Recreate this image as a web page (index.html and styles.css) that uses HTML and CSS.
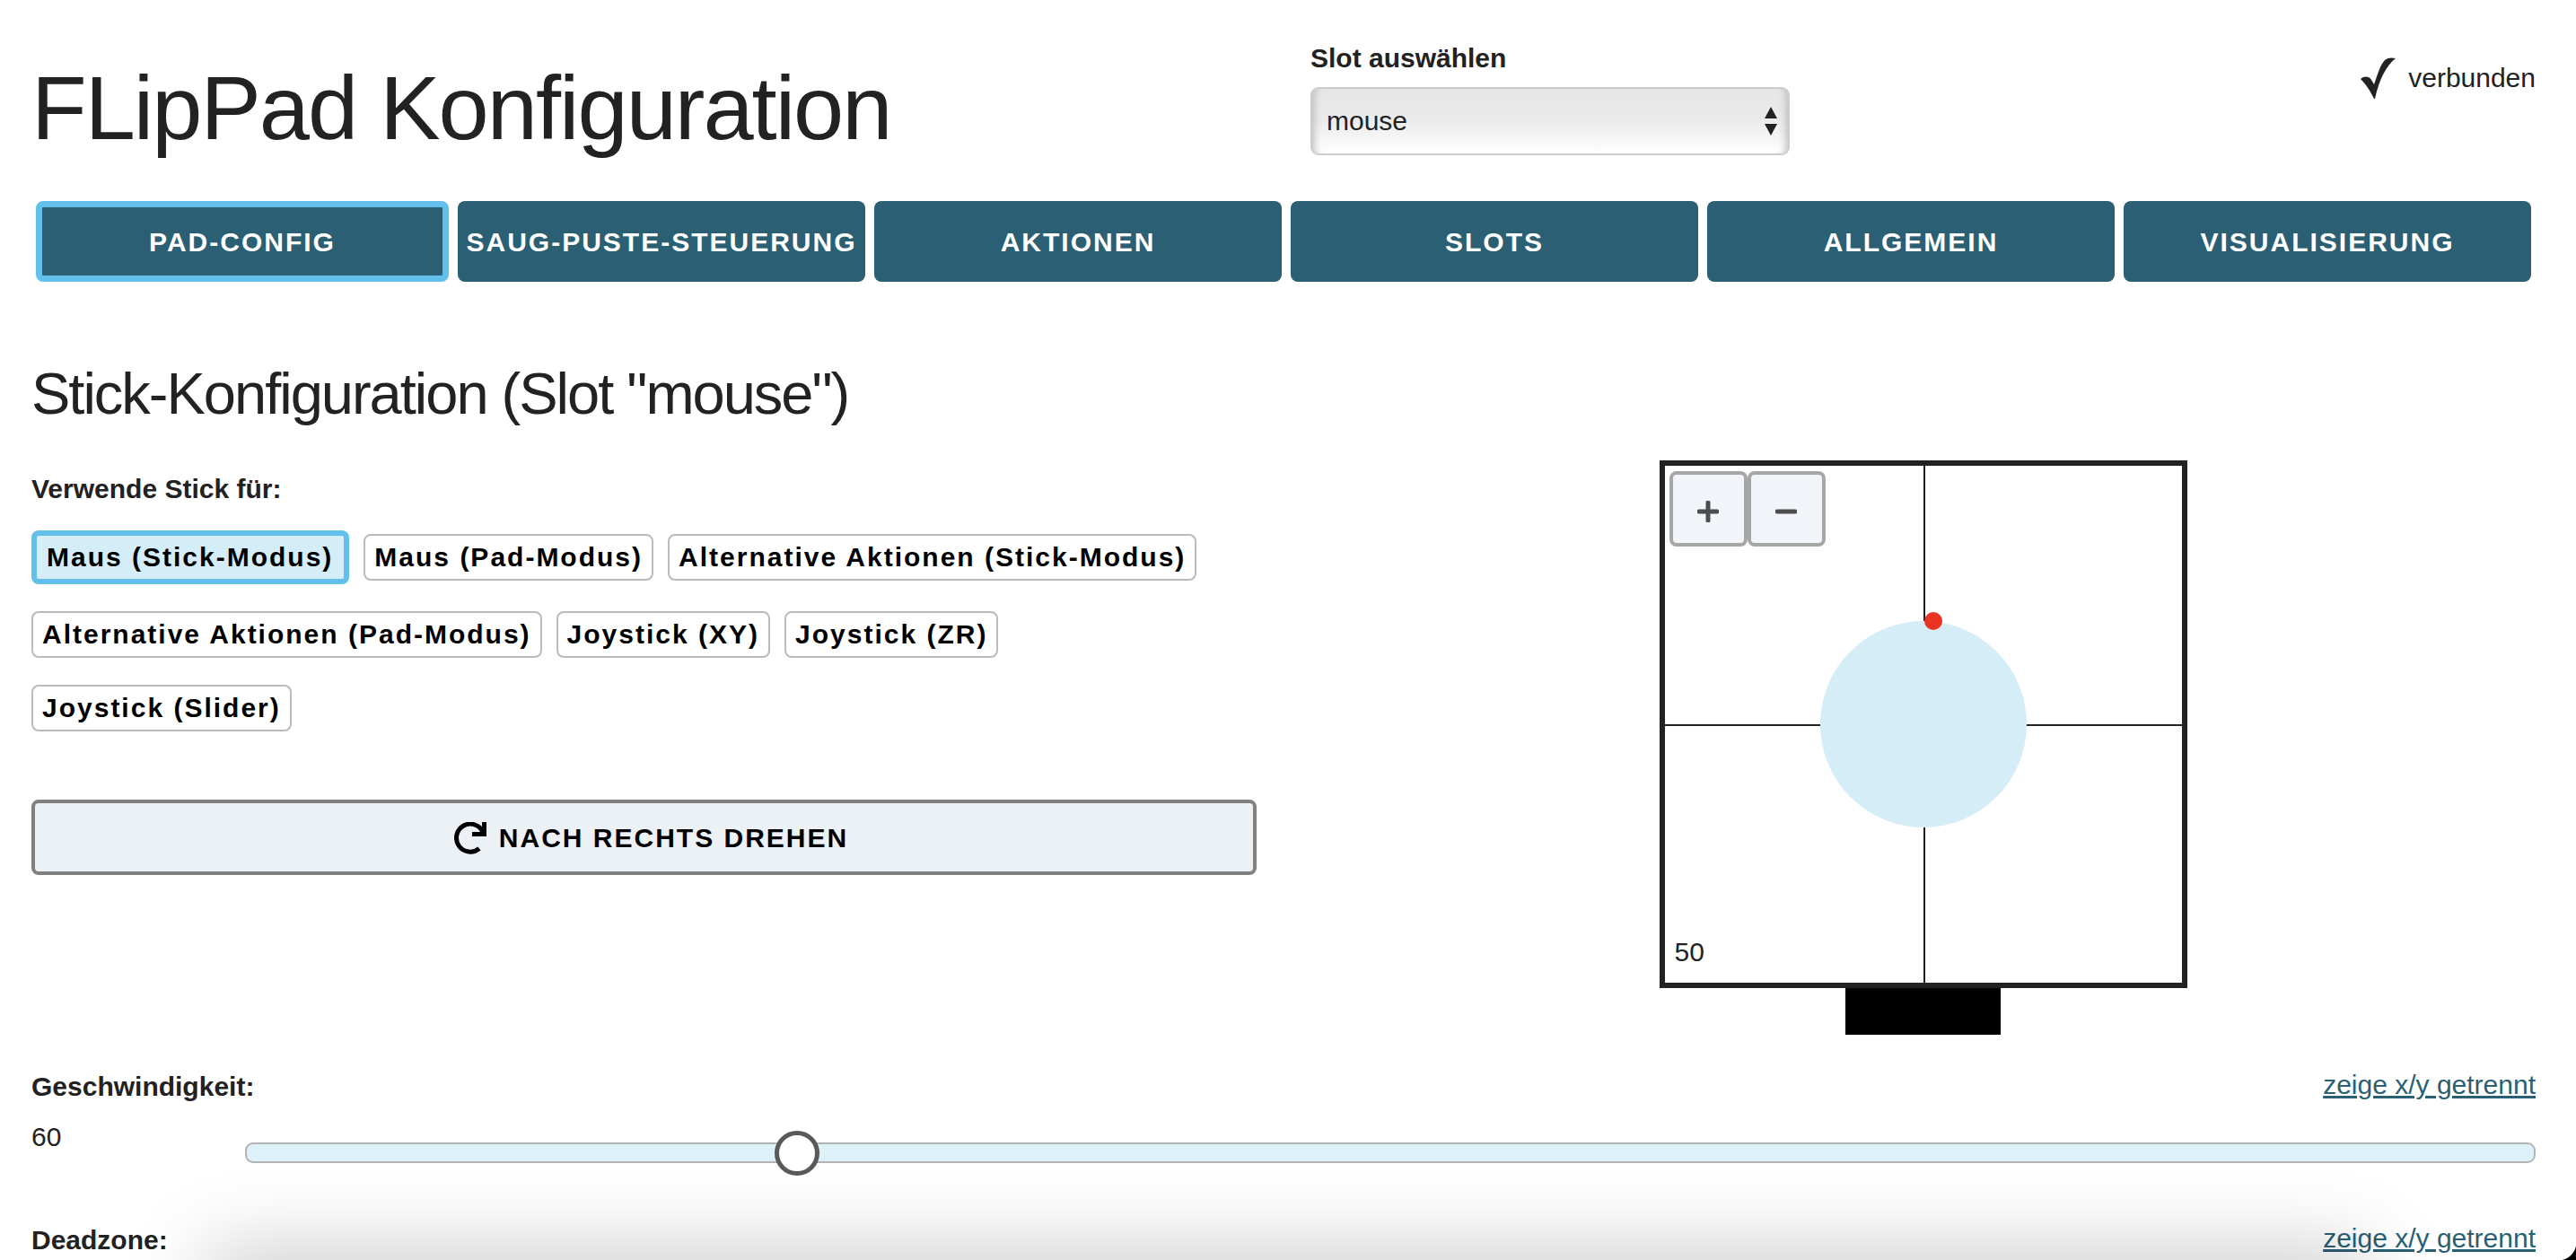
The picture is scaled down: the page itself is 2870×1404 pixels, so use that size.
FILE: index.html
```html
<!DOCTYPE html>
<html lang="de">
<head>
<meta charset="utf-8">
<meta name="viewport" content="width=device-width, initial-scale=1">
<title>FLipPad Konfiguration</title>
<link rel="stylesheet" href="styles.css">
</head>
<body>
<div class="page">
  <header class="header columns">
    <h1 class="title">FLipPad Konfiguration</h1>
    <div class="header-side">
      <div class="slot">
        <label class="label" for="slot">Slot auswählen</label>
        <div class="select-wrap">
          <select class="select" id="slot"><option>mouse</option></select>
          <svg class="select-arrows" viewBox="0 0 14 32" aria-hidden="true"><path d="M7 0 14 13H0ZM7 32 0 19H14Z"/></svg>
        </div>
      </div>
      <p class="status">
        <svg class="check" viewBox="0 0 39 46" aria-hidden="true"><path d="M0 24C4 20 10 21 12 25L15 30C19 19 22 8 27 3C30 0 35 0 39 1C28 10 21 24 16 46H15C11 38 7 31 0 24Z"/></svg>
        <span>verbunden</span>
      </p>
    </div>
  </header>

  <nav class="tabs">
    <button class="tab tab-active" type="button">Pad-Config</button>
    <button class="tab" type="button">Saug-Puste-Steuerung</button>
    <button class="tab" type="button">Aktionen</button>
    <button class="tab" type="button">Slots</button>
    <button class="tab" type="button">Allgemein</button>
    <button class="tab" type="button">Visualisierung</button>
  </nav>

  <main>
    <h2 class="subtitle">Stick-Konfiguration (Slot "mouse")</h2>
    <div class="columns">
      <section>
        <h3 class="label">Verwende Stick für:</h3>
        <div class="modes">
          <button class="mode mode-active" type="button">Maus (Stick-Modus)</button>
          <button class="mode" type="button">Maus (Pad-Modus)</button>
          <button class="mode" type="button">Alternative Aktionen (Stick-Modus)</button>
          <button class="mode" type="button">Alternative Aktionen (Pad-Modus)</button>
          <button class="mode" type="button">Joystick (XY)</button>
          <button class="mode" type="button">Joystick (ZR)</button>
          <button class="mode" type="button">Joystick (Slider)</button>
        </div>
        <button class="rotate" type="button">
          <svg class="rotate-icon" viewBox="0 0 36 36" aria-hidden="true"><path d="M28 29.500A15.500 15.500 0 1 1 32 11" fill="none" stroke="#000" stroke-width="5"/><path d="M31 0H36V16H20V11H28L31 8Z"/></svg>
          <span>Nach rechts drehen</span>
        </button>
      </section>
      <section class="pad-area">
        <div class="pad">
          <div class="pad-zone"></div>
          <div class="pad-dot"></div>
          <div class="pad-zoom">
            <button class="zoom" type="button" aria-label="Vergrößern"><svg viewBox="0 0 24 24"><path d="M12 2V22M2 12H22"/></svg></button>
            <button class="zoom" type="button" aria-label="Verkleinern"><svg viewBox="0 0 24 24"><path d="M2 12H22"/></svg></button>
          </div>
          <span class="pad-value">50</span>
        </div>
        <div class="pad-foot"></div>
      </section>
    </div>

    <section class="setting">
      <div class="setting-head">
        <label class="label" for="speed">Geschwindigkeit:</label>
        <a class="link" href="#speed">zeige x/y getrennt</a>
      </div>
      <div class="setting-row">
        <output class="setting-value" for="speed">60</output>
        <input class="slider" id="speed" type="range" min="0" max="255" value="60">
      </div>
    </section>
    <section class="setting">
      <div class="setting-head">
        <span class="label">Deadzone:</span>
        <a class="link" href="#deadzone">zeige x/y getrennt</a>
      </div>
    </section>
  </main>
</div>
<div class="bottom-shade" aria-hidden="true"></div>
<div class="window-corner" aria-hidden="true"></div>
</body>
</html>
```
FILE: styles.css
```css
* {
  box-sizing: border-box;
}

html,
body {
  height: 100%;
}

body {
  margin: 0;
  overflow: hidden;
  background: #fff;
  color: #222;
  font: 30px/48px "Liberation Sans", Arial, sans-serif;
}

button,
select {
  color: inherit;
  font: inherit;
}

button {
  cursor: pointer;
}

h1,
h2,
h3,
p {
  margin: 0;
}

.page {
  padding: 41px 45px 0 35px;
}

.columns {
  display: grid;
  grid-template-columns: 1fr 1fr;
  column-gap: 60px;
}

.label {
  display: block;
  font-size: 30px;
  font-weight: 700;
  line-height: 48px;
}

/* Header */

.title {
  padding-top: 19px;
  font-size: 101px;
  font-weight: 400;
  line-height: 120px;
  letter-spacing: -2px;
}

.header-side {
  display: flex;
  justify-content: space-between;
  align-items: flex-start;
}

.slot {
  width: 534px;
}

.select-wrap {
  display: grid;
  align-items: center;
  margin-top: 8px;
}

.select,
.select-arrows {
  grid-area: 1 / 1;
}

.select {
  width: 100%;
  height: 76px;
  padding: 0 16px;
  appearance: none;
  border: 2px solid #ccc;
  border-radius: 9px;
  background: linear-gradient(#e6e6e6, #ebebeb 50%, #fff);
  box-shadow: inset 10px 0 8px -8px #bbb, inset -10px 0 8px -8px #bbb;
}

.select-arrows {
  justify-self: end;
  width: 14px;
  height: 32px;
  margin-right: 14px;
  fill: #222;
  pointer-events: none;
}

.status {
  display: flex;
  align-items: center;
  gap: 14px;
  padding-top: 22px;
}

.check {
  width: 39px;
  height: 46px;
  fill: #222;
}

/* Tabs */

.tabs {
  display: flex;
  gap: 10px;
  margin-top: 44px;
  padding: 0 5px;
}

.tab {
  flex: 1 1 0;
  height: 90px;
  padding: 2px 4px 0;
  border: 0;
  border-radius: 8px;
  background: #2a5f74;
  color: #fff;
  font-weight: 700;
  letter-spacing: 2px;
  text-transform: uppercase;
  white-space: nowrap;
}

.tab-active {
  padding: 2px 0 0;
  border: 7px solid #62c0eb;
}

/* Stick configuration */

.subtitle {
  margin: 85px 0 42px;
  font-size: 65px;
  font-weight: 400;
  line-height: 80px;
  letter-spacing: -2px;
}

.modes {
  display: flex;
  flex-wrap: wrap;
  align-items: center;
  gap: 30px 16px;
  margin-top: 22px;
}

.mode {
  height: 52px;
  padding: 0 10px;
  border: 2px solid #bbb;
  border-radius: 8px;
  background: #fff;
  color: #000;
  font-weight: 700;
  line-height: 48px;
  letter-spacing: 2px;
}

.mode-active {
  height: 60px;
  padding: 0 12px 0 11px;
  border: 6px solid #62c0eb;
  background: #d4edf8;
}

.rotate {
  display: flex;
  justify-content: center;
  align-items: center;
  gap: 14px;
  width: 100%;
  height: 84px;
  margin-top: 76px;
  padding: 2px 0 0 16px;
  border: 4px solid #808080;
  border-radius: 8px;
  background: #ecf1f6;
  color: #000;
  font-weight: 700;
  letter-spacing: 2px;
  text-transform: uppercase;
}

.rotate-icon {
  width: 36px;
  height: 36px;
}

.pad-area {
  display: flex;
  flex-direction: column;
  align-items: center;
  margin-top: -8px;
}

.pad {
  position: relative;
  width: 588px;
  height: 588px;
  border: 6px solid #222;
  background:
    linear-gradient(#222, #222) 288px 0 / 2px 100% no-repeat,
    linear-gradient(#222, #222) 0 288px / 100% 2px no-repeat;
}

.pad-zone {
  position: absolute;
  inset: 173px;
  border-radius: 50%;
  background: #d4edf7;
}

.pad-dot {
  position: absolute;
  top: 163px;
  left: 289px;
  width: 20px;
  height: 20px;
  border-radius: 50%;
  background: #eb3323;
}

.pad-zoom {
  position: absolute;
  top: 6px;
  left: 5px;
  display: flex;
}

.zoom {
  display: grid;
  place-items: center;
  width: 87px;
  height: 84px;
  padding: 0;
  border: 4px solid #a6a6a6;
  border-radius: 8px;
  background: #f1f5f9;
}

.zoom svg {
  width: 24px;
  height: 24px;
  margin-top: 6px;
  stroke: #4d4d4d;
  stroke-width: 5;
  stroke-linecap: round;
}

.pad-value {
  position: absolute;
  bottom: 10px;
  left: 11px;
}

.pad-foot {
  width: 173px;
  height: 52px;
  background: #000;
}

/* Settings */

.setting {
  margin-top: 34px;
}

.setting-head {
  display: flex;
  justify-content: space-between;
  align-items: flex-start;
}

.link {
  line-height: 44px;
  color: #2a5f74;
}

.setting-row {
  display: grid;
  grid-template-columns: 238px 1fr;
  align-items: start;
  margin-top: 8px;
}

.slider {
  width: 100%;
  height: 23px;
  margin: 30px 0 28px;
  appearance: none;
  border: 2px solid #b3b3b3;
  border-radius: 9px;
  background: #ddf1f8;
}

.slider::-webkit-slider-thumb {
  width: 50px;
  height: 50px;
  appearance: none;
  border: 5px solid #595959;
  border-radius: 50%;
  background: #fff;
}

/* Shadow and rounded corner at the lower window edge */

.bottom-shade {
  position: fixed;
  right: 240px;
  bottom: -60px;
  left: 240px;
  height: 60px;
  box-shadow: 0 0 90px 10px rgba(0, 0, 0, 0.22);
  pointer-events: none;
}

.window-corner {
  position: fixed;
  right: 0;
  bottom: 0;
  width: 20px;
  height: 20px;
  background: radial-gradient(circle at 0 0, transparent 20px, #000 21px);
  pointer-events: none;
}
```
